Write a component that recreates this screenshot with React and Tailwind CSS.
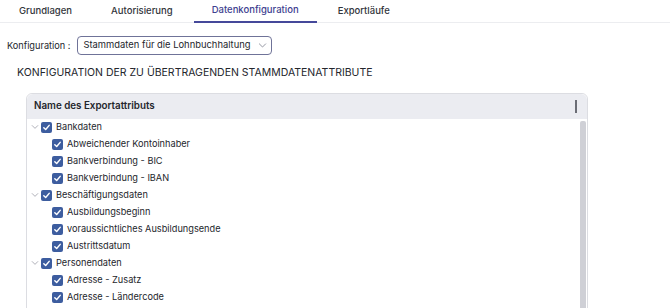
import React from "react";

const tabs = ["Grundlagen", "Autorisierung", "Datenkonfiguration", "Exportläufe"];

const groups = [
  {
    name: "Bankdaten",
    items: ["Abweichender Kontoinhaber", "Bankverbindung - BIC", "Bankverbindung - IBAN"],
  },
  {
    name: "Beschäftigungsdaten",
    items: ["Ausbildungsbeginn", "voraussichtliches Ausbildungsende", "Austrittsdatum"],
  },
  {
    name: "Personendaten",
    items: ["Adresse - Zusatz", "Adresse - Ländercode"],
  },
];

const Check = () => (
  <span className="w-[11px] h-[11px] rounded-[2px] bg-[#3d5d9f] flex items-center justify-center shrink-0">
    <svg width="9" height="9" viewBox="0 0 10 10" fill="none">
      <path d="M2 5.2L4.1 7.3L8 2.6" stroke="white" strokeWidth="1.6" strokeLinecap="round" strokeLinejoin="round" />
    </svg>
  </span>
);

const Chevron = ({ size = 8, color = "#9a9ca6" }) => (
  <svg width={size} height={size} viewBox="0 0 10 10" fill="none">
    <path d="M1.5 3.2L5 6.7L8.5 3.2" stroke={color} strokeWidth="1" strokeLinecap="round" strokeLinejoin="round" />
  </svg>
);

export default function App() {
  return (
    <div className="w-[670px] h-[308px] overflow-hidden bg-white text-[#24262c] font-['Inter',sans-serif]">
      {/* Tabs */}
      <div className="flex h-[23px] border-b border-[#ecedf0] pl-[1px] gap-[3px]">
        {tabs.map((t) => (
          <div
            key={t}
            className={`px-[18px] h-[23px] flex items-center text-[9.5px] font-medium ${
              t === "Datenkonfiguration"
                ? "text-[#3e4190] border-b-2 border-[#45489a]"
                : "text-[#33353b]"
            }`}
          >
            {t}
          </div>
        ))}
      </div>

      {/* Konfiguration select */}
      <div className="flex items-center mt-[13px] pl-[7px] gap-[7px]">
        <span className="text-[9.2px] whitespace-nowrap">Konfiguration :</span>
        <div className="w-[195px] h-[19px] border border-[#6f7398] rounded-[4px] flex items-center pl-[5px]">
          <span className="text-[9.4px] whitespace-nowrap">Stammdaten für die Lohnbuchhaltung</span>
          <span className="ml-[7px] flex">
            <Chevron size={9} color="#8a8d9a" />
          </span>
        </div>
      </div>

      <div className="pl-[17px] mt-[10px] text-[10.5px] whitespace-nowrap">
        KONFIGURATION DER ZU ÜBERTRAGENDEN STAMMDATENATTRIBUTE
      </div>

      {/* Table */}
      <div className="ml-[26px] mt-[12px] w-[562px] border border-[#dcdde2] rounded-t-[6px]">
        <div className="h-[25px] bg-[#ebecf1] rounded-t-[6px] flex items-center justify-between pl-[7px] pr-[10px]">
          <span className="text-[9.8px] font-semibold">Name des Exportattributs</span>
          <span className="w-[2px] h-[13px] bg-[#6b6d75]" />
        </div>
        <div className="flex h-[200px]">
          <div className="flex-1">
            {groups.map((g) => (
              <div key={g.name}>
                <div className="h-[17px] flex items-center pl-[3px]">
                  <span className="w-[10px] flex justify-center">
                    <Chevron size={8} />
                  </span>
                  <span className="ml-[1px]"><Check /></span>
                  <span className="ml-[4px] text-[9.2px] whitespace-nowrap">{g.name}</span>
                </div>
                {g.items.map((it) => (
                  <div key={it} className="h-[17px] flex items-center pl-[25px]">
                    <Check />
                    <span className="ml-[4px] text-[9.2px] whitespace-nowrap">{it}</span>
                  </div>
                ))}
              </div>
            ))}
          </div>
          <div className="w-[7px] pt-[2px] pr-[1px]">
            <div className="w-[6px] h-full bg-[#cfd0d6] rounded-t-[2px]" />
          </div>
        </div>
      </div>
    </div>
  );
}
